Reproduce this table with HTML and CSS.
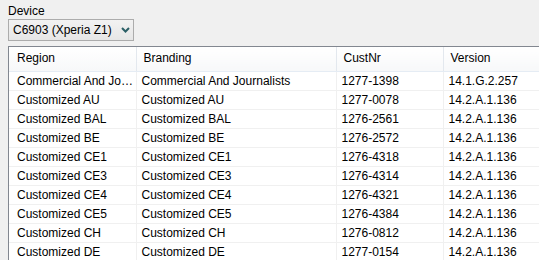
FILE: index.html
```html
<!DOCTYPE html>
<html lang="en">
<head>
  <meta charset="UTF-8" />
  <title>Device Firmware</title>
  <link rel="stylesheet" href="styles.css">
</head>
<body>
  <div class="field">
    <label class="field-label" for="device">Device</label>
    <div class="combo" id="device">
      <span class="combo-text">C6903 (Xperia Z1)</span>
      <svg class="combo-arrow" width="9" height="6" viewBox="0 0 9 6">
        <path d="M1 1 L4.5 4.5 L8 1" fill="none" stroke="#2b5f66" stroke-width="2"/>
      </svg>
    </div>
  </div>

  <div class="list">
    <table class="grid">
      <colgroup>
        <col class="c-region">
        <col class="c-branding">
        <col class="c-cust">
        <col class="c-version">
      </colgroup>
      <thead>
        <tr>
          <th>Region</th>
          <th>Branding</th>
          <th>CustNr</th>
          <th>Version</th>
        </tr>
      </thead>
      <tbody>
        <tr><td>Commercial And Journalists</td><td>Commercial And Journalists</td><td>1277-1398</td><td>14.1.G.2.257</td></tr>
        <tr><td>Customized AU</td><td>Customized AU</td><td>1277-0078</td><td>14.2.A.1.136</td></tr>
        <tr><td>Customized BAL</td><td>Customized BAL</td><td>1276-2561</td><td>14.2.A.1.136</td></tr>
        <tr><td>Customized BE</td><td>Customized BE</td><td>1276-2572</td><td>14.2.A.1.136</td></tr>
        <tr><td>Customized CE1</td><td>Customized CE1</td><td>1276-4318</td><td>14.2.A.1.136</td></tr>
        <tr><td>Customized CE3</td><td>Customized CE3</td><td>1276-4314</td><td>14.2.A.1.136</td></tr>
        <tr><td>Customized CE4</td><td>Customized CE4</td><td>1276-4321</td><td>14.2.A.1.136</td></tr>
        <tr><td>Customized CE5</td><td>Customized CE5</td><td>1276-4384</td><td>14.2.A.1.136</td></tr>
        <tr><td>Customized CH</td><td>Customized CH</td><td>1276-0812</td><td>14.2.A.1.136</td></tr>
        <tr><td>Customized DE</td><td>Customized DE</td><td>1277-0154</td><td>14.2.A.1.136</td></tr>
      </tbody>
    </table>
  </div>
</body>
</html>
```

FILE: styles.css
```css
* {
  box-sizing: border-box;
}
html, body {
  height: 100%;
}
body {
  margin: 0;
  padding: 4px 0 0 8px;
  background: #f0f0f0;
  color: #000;
  font-family: "Liberation Sans", Arial, sans-serif;
  font-size: 12px;
  overflow: hidden;
}
.field {
  display: flex;
  flex-direction: column;
  gap: 1px;
}
.field-label {
  line-height: 14px;
}
.combo {
  width: 126px;
  height: 22px;
  display: flex;
  align-items: center;
  justify-content: space-between;
  padding: 0 3px 0 4px;
  border: 1px solid #acacac;
  background: linear-gradient(#f2f2f2, #e6e6e6);
}
.combo-arrow {
  display: block;
}
.list {
  margin-top: 5px;
  width: 560px;
  border: 1px solid #828790;
  border-right: none;
  border-bottom: none;
  background: #fff;
}
.grid {
  table-layout: fixed;
  border-collapse: collapse;
  width: 560px;
}
.c-region { width: 127px; }
.c-branding { width: 200px; }
.c-cust { width: 107px; }
.c-version { width: 126px; }
.grid th {
  height: 24px;
  padding: 0 0 1px 7px;
  font-weight: normal;
  text-align: left;
  background: linear-gradient(#ffffff, #f7f8f9);
  border-right: 1px solid #e3e8ee;
  border-bottom: 1px solid #e5ecf4;
}
.grid th:first-child {
  padding-left: 8px;
}
.grid td {
  height: 19px;
  padding: 0 2px 0 5px;
  white-space: nowrap;
  overflow: hidden;
  text-overflow: ellipsis;
  border-right: 1px solid #f0f0f0;
  border-bottom: 1px solid #f0f0f0;
}
.grid td:first-child {
  padding-left: 8px;
}
```
